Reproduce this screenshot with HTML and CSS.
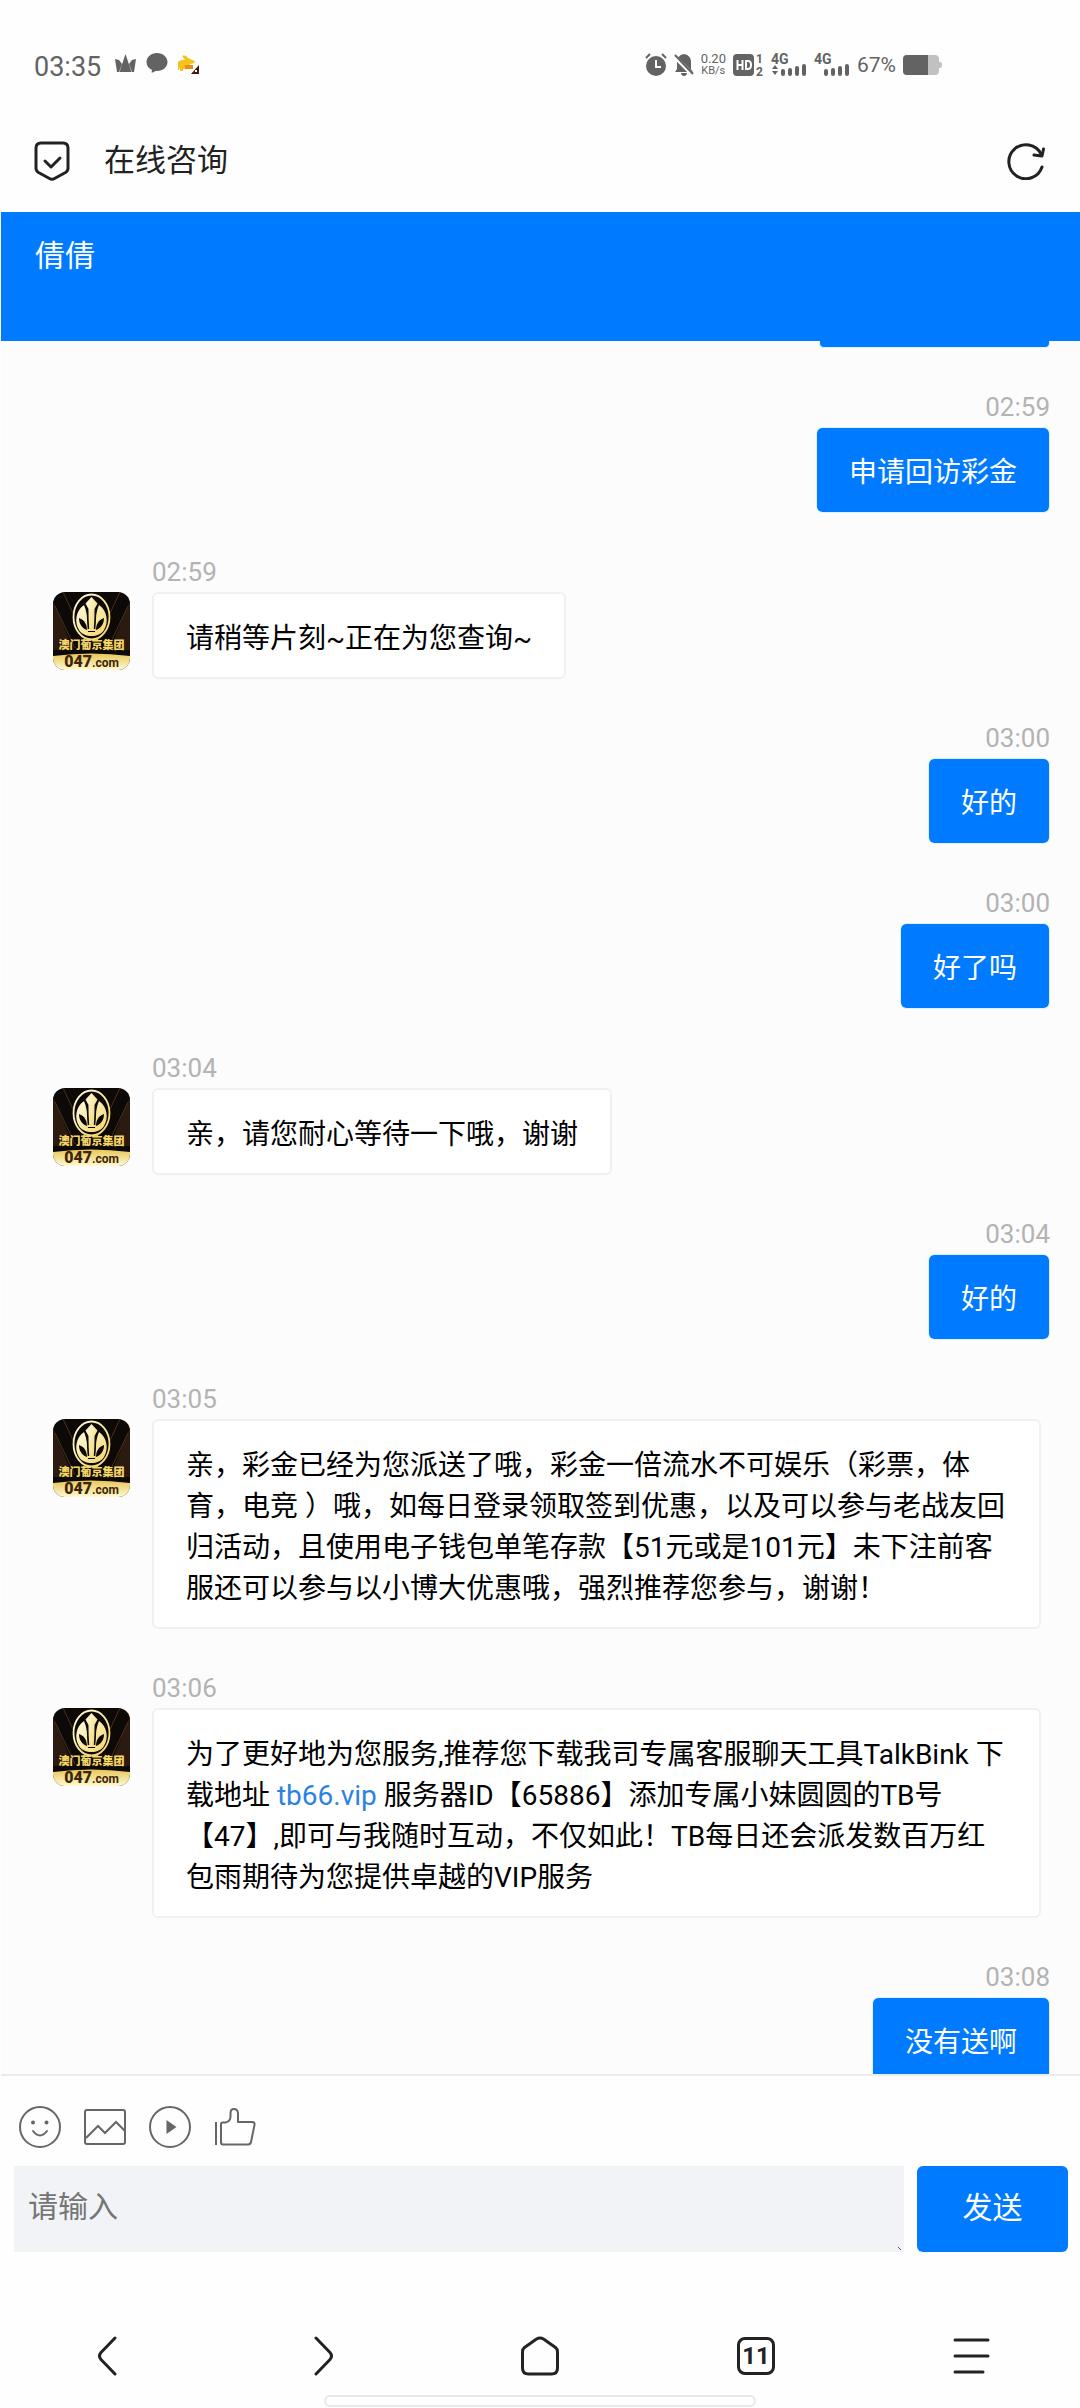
FILE: index.html
```html
<!DOCTYPE html>
<html lang="zh-CN">
  <head>
    <meta charset="UTF-8" />
    <meta name="viewport" content="width=device-width, initial-scale=1.0" />
    <title>在线咨询</title>
    <link rel="stylesheet" href="styles.css">
  </head>
  <body>
    <!-- Shared avatar drawing -->
    <svg class="sprite" width="0" height="0">
      <defs>
        <linearGradient id="gold" x1="0" y1="0" x2="1" y2="1">
          <stop offset="0" stop-color="#fffbe0" />
          <stop offset="1" stop-color="#f3d568" />
        </linearGradient>
        <linearGradient id="base" x1="0" y1="0" x2="0" y2="1">
          <stop offset="0" stop-color="#e8c65a" />
          <stop offset="1" stop-color="#fffad0" />
        </linearGradient>
      </defs>
      <symbol id="avatar" viewBox="0 0 77 78">
        <rect width="77" height="78" fill="#0d0906" />
        <path d="M0 8l20 50H0zM77 8L57 58h20z" fill="#2a1a10" />
        <path d="M2 14l20 42M75 14L55 56M10 0l16 34M67 0L51 34" fill="none" stroke="#4a3220" stroke-width="1" />
        <ellipse cx="38.500" cy="25" rx="18" ry="22.500" fill="#0d0906" stroke="url(#gold)" stroke-width="1.800" />
        <path d="M38.500 5l6 6.500-3 5.500 1 22h-8l1-22-3-5.500z" fill="url(#gold)" />
        <path d="M31 13c-8 5-10 17-5 25 5 8 20 8 25 0 5-8 3-20-5-25-2 5-3 9-3 14l-1 13h-7l-1-13c0-5-1-9-3-14z" fill="url(#gold)" />
        <path d="M26 26c6 2 8 7 8 12-5-2-8-6-8-12zM51 26c-6 2-8 7-8 12 5-2 8-6 8-12z" fill="#0d0906" />
        <path d="M34.500 19l1 18M42.500 19l-1 18" stroke="#0d0906" stroke-width="1.400" />
        <path d="M0 64q38-5 77 0v14H0z" fill="url(#base)" />
      </symbol>
    </svg>

    <!-- Phone status bar -->
    <div class="status-bar">
      <span class="clock">03:35</span>
      <svg class="notices" width="86" height="24" viewBox="0 0 86 24">
        <path d="M10.500 1l6 18h-12zM0 6l4 1 3 4-3 8H2zM21 6l-4 1-3 4 3 8h2z" fill="#636363" />
        <path d="M42 0c6 0 10.500 4 10.500 9S48 18 42 18c-.8 0-1.500 0-2 .2-1 .8-2 1.300-3.500 1.300l.6-2.500C33.500 15.500 31.500 12.500 31.500 9 31.500 4 36 0 42 0z" fill="#636363" />
        <path d="M63 9c2-2 4-2 7-2l-3-4c3-1 5 0 6 2l4 2 3 1c0 2-2 3-5 3l-2 5h-5v2h-3v-4l-1 3h-1z" fill="#f6c31c" />
        <path d="M70 12h8v4h-8z" fill="#ef8c12" />
        <path d="M84 12v9h-8z" fill="#3c1a10" />
        <path d="M80 17h2v2h-2z" fill="#fff" />
      </svg>
      <div class="status-right">
        <svg width="22" height="24" viewBox="0 0 22 24">
          <circle cx="11" cy="13" r="10" fill="#636363" />
          <path d="M1 5l4-4M21 5l-4-4" stroke="#636363" stroke-width="2" />
          <path d="M11 7v7h5" fill="none" stroke="#fff" stroke-width="2" />
        </svg>
        <svg width="20" height="24" viewBox="0 0 20 24">
          <path d="M10 1c5 1 7 4 7 8v7l2 3H1l2-3V9c0-4 2-7 7-8zM7 20h6c0 4-6 4-6 0z" fill="#636363" />
          <path d="M-1 2l20 20" stroke="#fff" stroke-width="4" />
          <path d="M1 2l18 19" stroke="#636363" stroke-width="2" />
        </svg>
        <div class="speed">
          <span>0.20</span>
          <span class="unit">KB/s</span>
        </div>
        <svg width="31" height="24" viewBox="0 0 31 24">
          <rect x="0" y="1" width="21" height="22" rx="4" fill="#636363" />
          <path d="M4.500 7v10M9.500 7v10M4.500 12h5M13 8h2q3 0 3 4t-3 4h-2z" fill="none" stroke="#fff" stroke-width="2" />
          <text class="sim" x="23" y="10">1</text>
          <text class="sim" x="23" y="23">2</text>
        </svg>
        <svg width="36" height="24" viewBox="0 0 36 24">
          <text class="network" x="0" y="11">4G</text>
          <path d="M1 16l3-4 3 4zM1 18l3 4 3-4z" fill="#636363" />
          <path d="M12 21v-3M19 21v-4M26 21v-6M33 21v-8" stroke="#636363" stroke-width="4" stroke-linecap="round" />
        </svg>
        <svg width="36" height="24" viewBox="0 0 36 24">
          <text class="network" x="0" y="11">4G</text>
          <path d="M12 21v-3M19 21v-4M26 21v-6M33 21v-8" stroke="#636363" stroke-width="4" stroke-linecap="round" />
        </svg>
        <span class="battery-level">67%</span>
        <svg width="39" height="20" viewBox="0 0 39 20">
          <rect width="36" height="20" rx="4" fill="#c1c1c1" />
          <path d="M36 7h1q2 0 2 3t-2 3h-1z" fill="#c1c1c1" />
          <path d="M4 0h21v20H4q-4 0-4-4V4q0-4 4-4z" fill="#636363" />
        </svg>
      </div>
    </div>

    <!-- Browser title bar -->
    <header class="title-bar">
      <svg width="36" height="40" viewBox="0 0 36 40" fill="none" stroke="#222" stroke-width="3" stroke-linecap="round" stroke-linejoin="round">
        <path d="M7 2h22q5 0 5 5v20q0 3-2.500 4.500L20.500 37.500q-2.500 1.500-5 0L4.500 31.500Q2 30 2 27V7q0-5 5-5z" />
        <path d="M11 20l6 6 9-9" />
      </svg>
      <h1>在线咨询</h1>
      <button class="icon-button" type="button" aria-label="刷新">
        <svg width="38" height="38" viewBox="0 0 38 38" fill="none" stroke="#222" stroke-width="3" stroke-linecap="round" stroke-linejoin="round">
          <path d="M35 25a17 17 0 1 1-1-13" />
          <path d="M27 13l8 1 1.500-7" />
        </svg>
      </button>
    </header>

    <main class="webview">
      <div class="agent-bar">倩倩</div>

      <div class="chat">
        <div class="bubble-tail"></div>

        <div class="message mine">
          <div class="content">
            <time>02:59</time>
            <p class="bubble">申请回访彩金</p>
          </div>
        </div>

        <div class="message">
          <div class="avatar">
            <svg width="77" height="78"><use href="#avatar" /></svg>
            <span class="avatar-name">澳门葡京集团</span>
            <span class="avatar-site"><b>047</b>.com</span>
          </div>
          <div class="content">
            <time>02:59</time>
            <p class="bubble">请稍等片刻~正在为您查询~</p>
          </div>
        </div>

        <div class="message mine">
          <div class="content">
            <time>03:00</time>
            <p class="bubble">好的</p>
          </div>
        </div>

        <div class="message mine">
          <div class="content">
            <time>03:00</time>
            <p class="bubble">好了吗</p>
          </div>
        </div>

        <div class="message">
          <div class="avatar">
            <svg width="77" height="78"><use href="#avatar" /></svg>
            <span class="avatar-name">澳门葡京集团</span>
            <span class="avatar-site"><b>047</b>.com</span>
          </div>
          <div class="content">
            <time>03:04</time>
            <p class="bubble">亲，请您耐心等待一下哦，谢谢</p>
          </div>
        </div>

        <div class="message mine">
          <div class="content">
            <time>03:04</time>
            <p class="bubble">好的</p>
          </div>
        </div>

        <div class="message">
          <div class="avatar">
            <svg width="77" height="78"><use href="#avatar" /></svg>
            <span class="avatar-name">澳门葡京集团</span>
            <span class="avatar-site"><b>047</b>.com</span>
          </div>
          <div class="content">
            <time>03:05</time>
            <p class="bubble">亲，彩金已经为您派送了哦，彩金一倍流水不可娱乐（彩票，体育，电竞 ）哦，如每日登录领取签到优惠，以及可以参与老战友回归活动，且使用电子钱包单笔存款【51元或是101元】未下注前客服还可以参与以小博大优惠哦，强烈推荐您参与，谢谢！</p>
          </div>
        </div>

        <div class="message">
          <div class="avatar">
            <svg width="77" height="78"><use href="#avatar" /></svg>
            <span class="avatar-name">澳门葡京集团</span>
            <span class="avatar-site"><b>047</b>.com</span>
          </div>
          <div class="content">
            <time>03:06</time>
            <p class="bubble">为了更好地为您服务,推荐您下载我司专属客服聊天工具TalkBink 下载地址 <a href="#">tb66.vip</a> 服务器ID【65886】添加专属小妹圆圆的TB号【47】,即可与我随时互动，不仅如此！TB每日还会派发数百万红包雨期待为您提供卓越的VIP服务</p>
          </div>
        </div>

        <div class="message mine">
          <div class="content">
            <time>03:08</time>
            <p class="bubble">没有送啊</p>
          </div>
        </div>
      </div>

      <!-- Message editor -->
      <form class="editor">
        <div class="tools">
          <button class="icon-button" type="button" aria-label="表情">
            <svg width="42" height="42" viewBox="0 0 42 42" fill="none" stroke="#666" stroke-width="2" stroke-linecap="round">
              <circle cx="21" cy="21" r="20" />
              <circle cx="14" cy="16.500" r="2" fill="#666" stroke="none" />
              <circle cx="27.500" cy="16.500" r="2" fill="#666" stroke="none" />
              <path d="M14 25q7 9 14 0" />
            </svg>
          </button>
          <button class="icon-button" type="button" aria-label="图片">
            <svg width="42" height="42" viewBox="0 0 42 42" fill="none" stroke="#666" stroke-width="2">
              <rect x="1" y="4" width="40" height="34" rx="2" />
              <path d="M2 32l12-12 7 7 11-11 9 9" />
            </svg>
          </button>
          <button class="icon-button" type="button" aria-label="视频">
            <svg width="42" height="42" viewBox="0 0 42 42">
              <circle cx="21" cy="21" r="20" fill="none" stroke="#666" stroke-width="2" />
              <path d="M17.500 14v14l10-7z" fill="#666" />
            </svg>
          </button>
          <button class="icon-button" type="button" aria-label="评价">
            <svg width="42" height="42" viewBox="0 0 42 42" fill="none" stroke="#666" stroke-width="2" stroke-linejoin="round">
              <path d="M2 16v23" />
              <path d="M7 18q0-1.500 1.500-1.500h3q5-1 5-6V7q0-4 3.500-4t4 4v9h14q3 0 2.500 3l-3.500 17q-.5 2.500-3 2.500H9q-2 0-2-2z" />
            </svg>
          </button>
        </div>
        <div class="input-row">
          <div class="input-box">
            <textarea aria-label="请输入" placeholder="请输入"></textarea>
            <svg class="grip" width="4" height="4" viewBox="0 0 4 4"><path d="M0 0l3 3" stroke="#555" /></svg>
          </div>
          <button class="send" type="button">发送</button>
        </div>
      </form>
    </main>

    <!-- Browser navigation -->
    <nav class="nav-bar">
      <button class="icon-button" type="button" aria-label="后退">
        <svg width="38" height="40" viewBox="0 0 38 40"><path d="M26 2L12 16.500q-3 3.500 0 7L26 38" /></svg>
      </button>
      <button class="icon-button" type="button" aria-label="前进">
        <svg width="38" height="40" viewBox="0 0 38 40"><path d="M11 2l14 14.500q3 3.500 0 7L11 38" /></svg>
      </button>
      <button class="icon-button" type="button" aria-label="主页">
        <svg width="38" height="40" viewBox="0 0 38 40"><path d="M3.500 11.500l12-8.500q3.500-2 7 0l12 8.500Q36.500 13 36.500 16v16q0 6-6 6h-23q-6 0-6-6V16q0-3 2-4.500z" /></svg>
      </button>
      <button class="icon-button tabs" type="button">11</button>
      <button class="icon-button" type="button" aria-label="菜单">
        <svg width="38" height="40" viewBox="0 0 38 40"><path d="M2 4h33M2 20h33M2 36h28" /></svg>
      </button>
    </nav>
    <div class="home-pill"></div>
  </body>
</html>
```

FILE: styles.css
```css
* {
  box-sizing: border-box;
}
body {
  margin: 0;
  height: 100vh;
  display: flex;
  flex-direction: column;
  background: #fefefe;
  color: #000;
  font-family: Roboto, "Noto Sans CJK SC", sans-serif;
  text-spacing-trim: space-all;
}
svg {
  display: block;
  flex: none;
}
.sprite {
  position: absolute;
}
.icon-button {
  display: flex;
  padding: 0;
  border: 0;
  background: none;
  color: #222;
}

/* Status bar */
.status-bar {
  display: flex;
  align-items: center;
  height: 110px;
  padding: 20px 138px 0 34px;
  color: #636363;
}
.clock {
  padding-top: 4px;
  font-size: 27px;
  line-height: 30px;
}
.notices {
  margin-left: 14px;
}
.status-right {
  display: flex;
  align-items: center;
  gap: 7px;
  margin-left: auto;
}
.speed {
  display: flex;
  flex-direction: column;
  align-items: center;
  font-size: 13px;
  line-height: 12px;
}
.unit {
  font-size: 11px;
}
.sim {
  font-size: 12px;
  font-weight: 700;
  fill: #636363;
}
.network {
  font-size: 14px;
  font-weight: 700;
  fill: #636363;
}
.battery-level {
  font-size: 21px;
  line-height: 24px;
}

/* Title bar */
.title-bar {
  display: flex;
  align-items: center;
  height: 102px;
  padding: 0 35px 0 34px;
}
.title-bar h1 {
  flex: 1;
  margin: 0 0 0 34px;
  color: #222;
  font-size: 31px;
  line-height: 40px;
  font-weight: 400;
}

/* Chat page */
.webview {
  flex: 1;
  min-height: 0;
  display: flex;
  flex-direction: column;
  padding-left: 1px;
}
.agent-bar {
  height: 129px;
  padding: 24px 34px;
  background: #007bff;
  color: #fff;
  font-size: 30px;
  line-height: 40px;
}
.chat {
  flex: 1;
  min-height: 0;
  overflow: hidden;
  padding: 0 30px 0 52px;
  background: #fcfcfc;
}
.bubble-tail {
  width: 231px;
  height: 7px;
  margin-left: auto;
  border: 1px solid #dff1ff;
  border-top: 0;
  border-radius: 0 0 5px 5px;
  background: #007bff;
}
.message {
  display: flex;
  gap: 22px;
  margin-top: 44px;
  padding-right: 9px;
}
.message.mine {
  justify-content: flex-end;
  padding-right: 0;
}
.avatar {
  flex: none;
  position: relative;
  align-self: flex-start;
  margin-top: 35px;
  border-radius: 12px;
  overflow: hidden;
}
.avatar-name,
.avatar-site {
  position: absolute;
  left: 0;
  right: 0;
  text-align: center;
  white-space: nowrap;
}
.avatar-name {
  top: 46px;
  color: #f5d766;
  font-size: 11px;
  line-height: 16px;
  font-weight: 900;
}
.avatar-site {
  top: 62px;
  color: #3d2508;
  font-size: 12px;
  line-height: 16px;
  font-weight: 700;
}
.avatar-site b {
  font-size: 16px;
  line-height: 16px;
  font-weight: 900;
}
.content {
  display: flex;
  flex-direction: column;
  align-items: flex-start;
}
.mine .content {
  align-items: flex-end;
}
time {
  margin-bottom: 5px;
  color: #b3b3b3;
  font-size: 26px;
  line-height: 30px;
}
.bubble {
  margin: 0;
  padding: 24px 32px 18px;
  border: 2px solid #f0f0f0;
  border-radius: 6px;
  background: #fff;
  font-size: 28px;
  line-height: 41px;
}
.bubble a {
  color: #2a82e4;
  text-decoration: none;
}
.mine .bubble {
  padding: 24px 32px 19px;
  border: 1px solid #dff1ff;
  background: #007bff;
  background-clip: padding-box;
  color: #fff;
}

/* Editor */
.editor {
  padding: 30px 12px 68px 13px;
  border-top: 2px solid #ebebeb;
}
.tools {
  display: flex;
  gap: 23px;
  padding: 0 5px 18px;
}
.input-row {
  display: flex;
  gap: 13px;
}
.input-box {
  flex: 1;
  position: relative;
}
textarea {
  display: block;
  width: 100%;
  height: 86px;
  padding: 19px 14px;
  border: 0;
  background: #f2f3f7;
  font: inherit;
  font-size: 30px;
  line-height: 44px;
  resize: none;
}
textarea::placeholder {
  color: #757575;
}
.grip {
  position: absolute;
  right: 2px;
  bottom: 1px;
}
.send {
  width: 151px;
  padding: 0 0 8px;
  border: 0;
  border-radius: 6px;
  background: #007bff;
  color: #fff;
  font: inherit;
  font-size: 30px;
}

/* Bottom navigation */
.nav-bar {
  display: grid;
  grid-template-columns: repeat(5, 1fr);
  justify-items: center;
  align-items: center;
  height: 72px;
}
.nav-bar svg {
  fill: none;
  stroke: #222;
  stroke-width: 3;
  stroke-linecap: round;
  stroke-linejoin: round;
}
.tabs {
  width: 38px;
  height: 38px;
  justify-content: center;
  align-items: center;
  border: 3px solid #222;
  border-radius: 8px;
  font: 700 24px/32px Roboto, sans-serif;
}
.home-pill {
  flex: none;
  width: 40%;
  height: 12px;
  margin: 3px auto 1px;
  border: 2px solid #e8e8e8;
  border-radius: 6px;
}
```
